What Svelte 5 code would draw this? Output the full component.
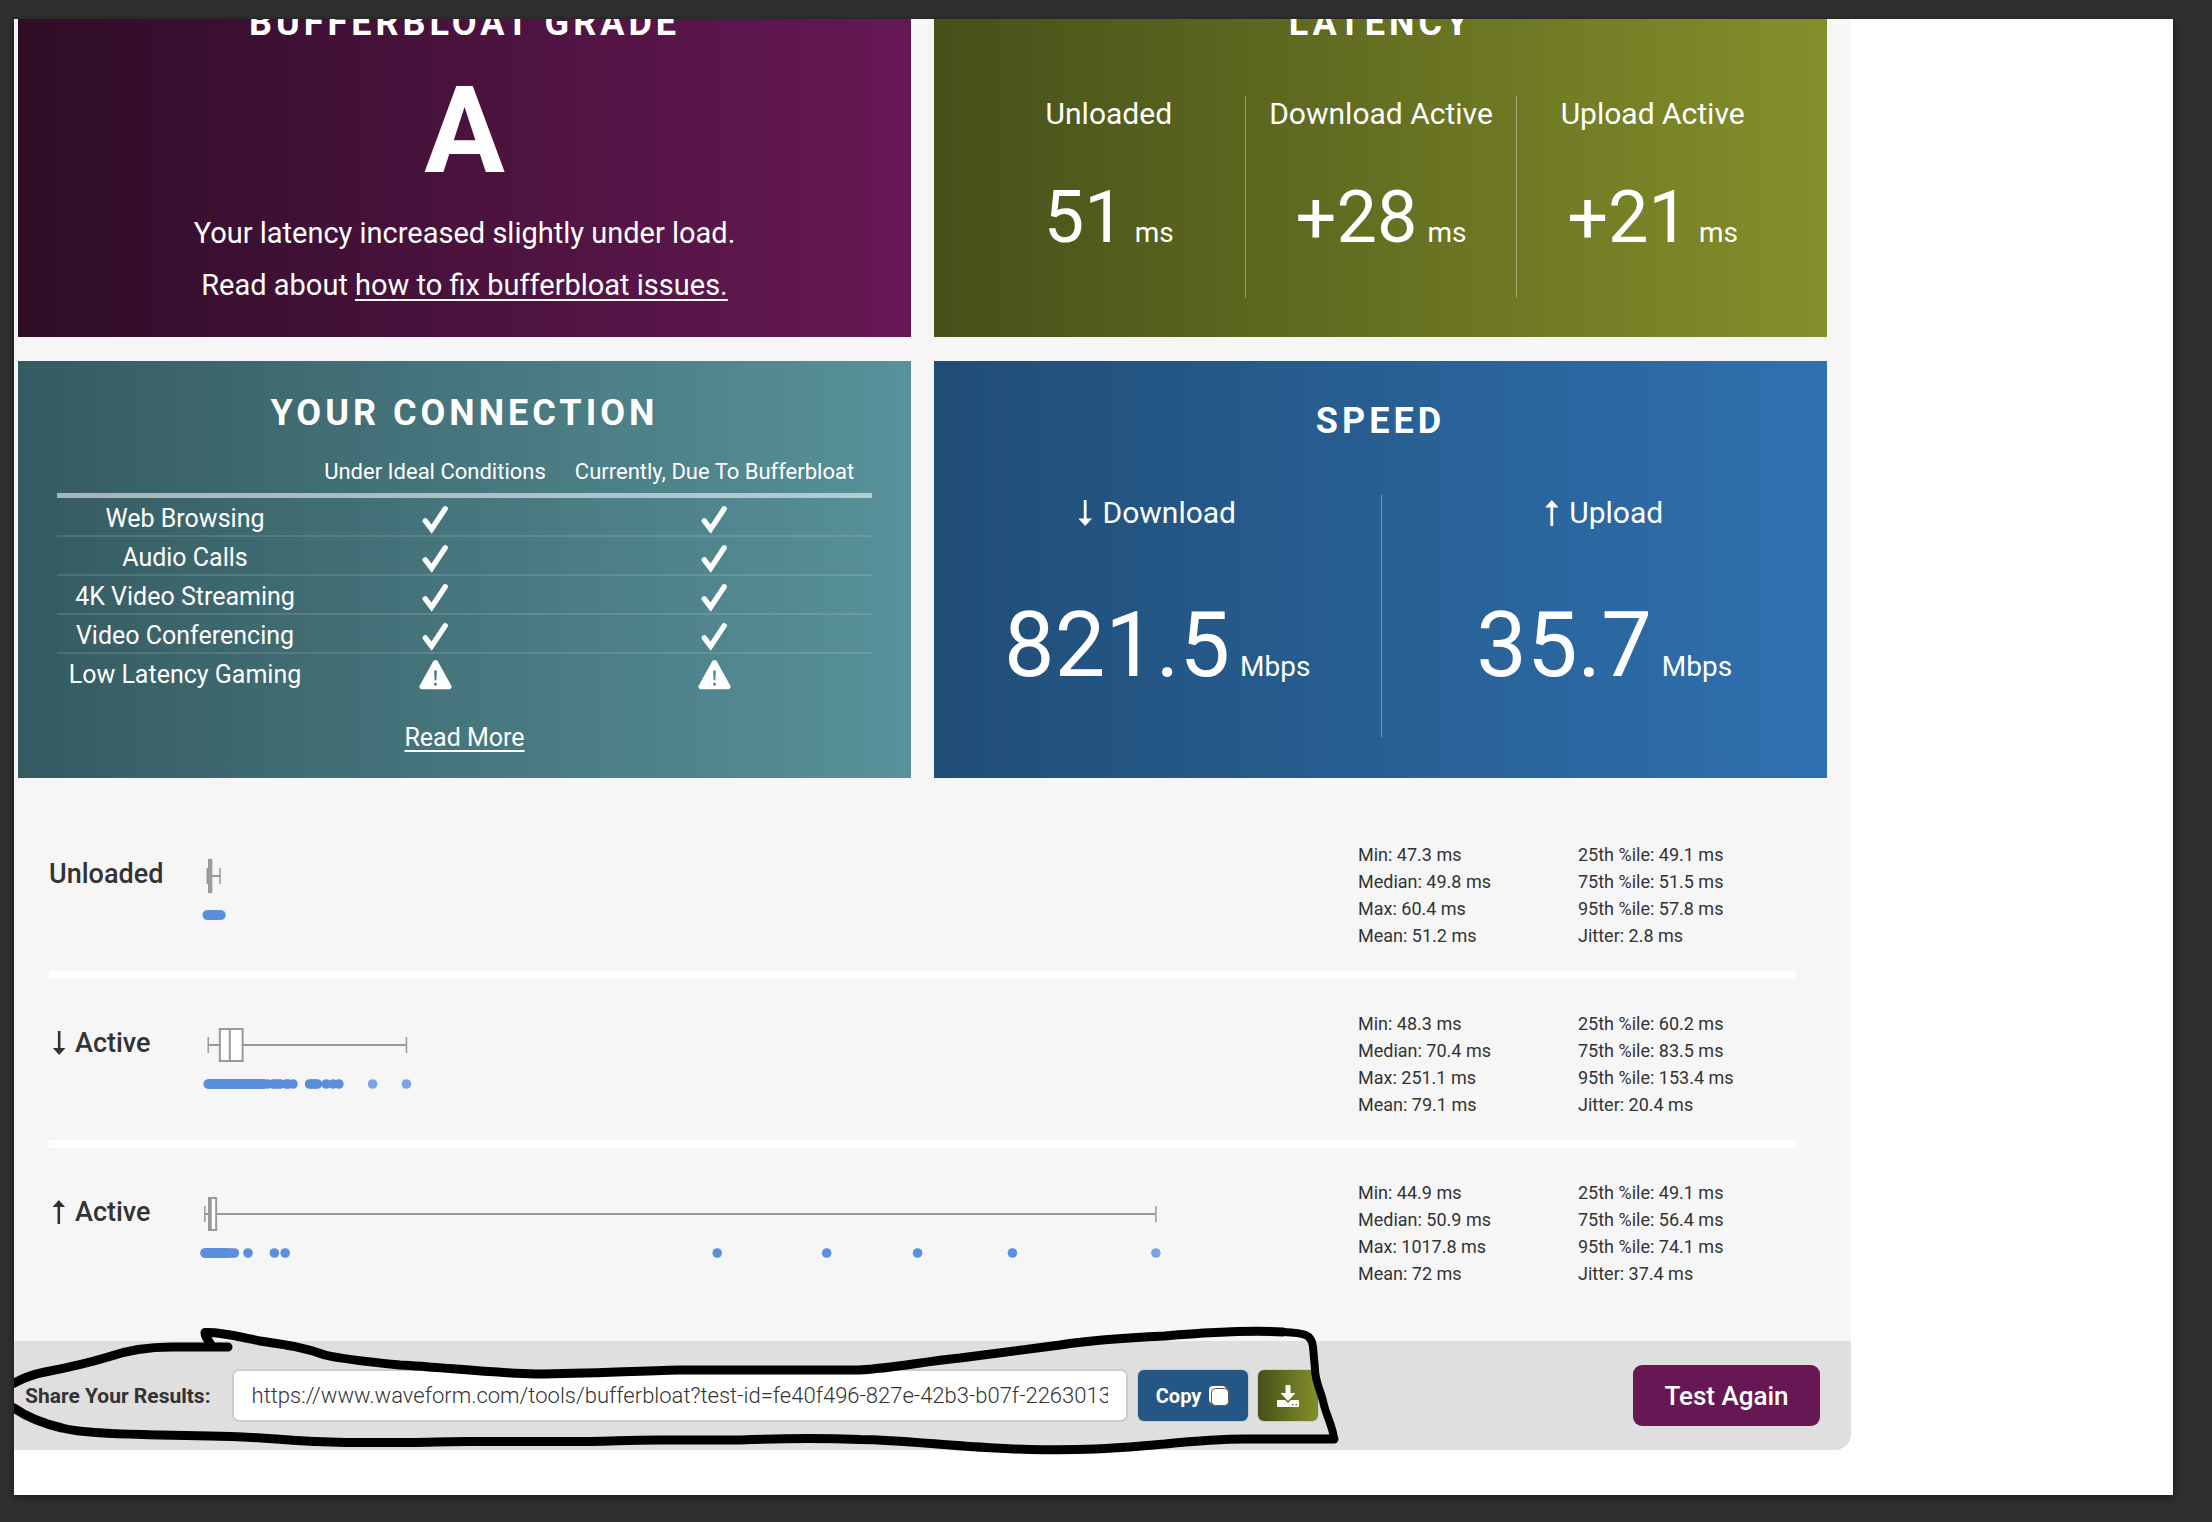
<script>
  const latency = [
    { label: 'Unloaded', value: '51' },
    { label: 'Download Active', value: '+28' },
    { label: 'Upload Active', value: '+21' },
  ];
  const speeds = [
    { label: 'Download', dir: 'down', value: '821.5' },
    { label: 'Upload', dir: 'up', value: '35.7' },
  ];
  const uses = [
    { name: 'Web Browsing', ok: true },
    { name: 'Audio Calls', ok: true },
    { name: '4K Video Streaming', ok: true },
    { name: 'Video Conferencing', ok: true },
    { name: 'Low Latency Gaming', ok: false },
  ];

  const run = (from, to, step) => {
    const out = [];
    for (let v = from; v <= to; v += step) out.push(v);
    return out;
  };

  const series = [
    {
      label: 'Unloaded', dir: '',
      min: 47.3, median: 49.8, max: 60.4, mean: 51.2, p25: 49.1, p75: 51.5, p95: 57.8, jitter: 2.8,
      dots: run(47.3, 61.4, 1), faint: [],
    },
    {
      label: 'Active', dir: 'down',
      min: 48.3, median: 70.4, max: 251.1, mean: 79.1, p25: 60.2, p75: 83.5, p95: 153.4, jitter: 20.4,
      dots: [...run(48.3, 106, 1), 109, 115, 117, 120, 122, 128, 130, 135, 152, 154, 156, 158, 160, 169, 176, 182],
      faint: [216.5, 251.1],
    },
    {
      label: 'Active', dir: 'up',
      min: 44.9, median: 50.9, max: 1017.8, mean: 72, p25: 49.1, p75: 56.4, p95: 74.1, jitter: 37.4,
      dots: [...run(44.9, 67, 1), 70, 72, 75, 89, 116, 127, 569, 681, 774, 871],
      faint: [1017.8],
    },
  ];

  // Milliseconds to plot units: the three rows share one axis.
  const px = (ms) => ms * 0.9775 - 28;

  let shareUrl = $state('https://www.waveform.com/tools/bufferbloat?test-id=fe40f496-827e-42b3-b07f-2263013a41c7');
</script>

{#snippet arrow(dir)}
  <svg class="arrow" class:up={dir === 'up'} viewBox="0 0 14 26" aria-hidden="true">
    <path d="M5.800 0h2.800v18.500H14L7.200 26 0.400 18.500H5.800z" fill="currentColor" />
  </svg>
{/snippet}

{#snippet status(ok)}
  {#if ok}
    <svg class="status" viewBox="0 0 34 34" role="img" aria-label="Good">
      <path d="M6.500 19.500l6.500 8.500L27 7" fill="none" stroke="#fff" stroke-width="5.500" stroke-linecap="round" stroke-linejoin="miter" />
    </svg>
  {:else}
    <svg class="status" viewBox="0 0 34 34" role="img" aria-label="Warning">
      <path fill="#fff" fill-rule="evenodd" d="M14.800 3.200a2.600 2.600 0 0 1 4.400 0l14 25.200a2.600 2.600 0 0 1-2.300 3.900H3.100a2.600 2.600 0 0 1-2.300-3.900zM15.600 13l.5 10h1.800l.5-10zM17 25.500a1.500 1.500 0 1 0 0 3 1.500 1.500 0 0 0 0-3z" />
    </svg>
  {/if}
{/snippet}

<div class="frame">
  <main class="canvas">
    <div class="panel">
      <div class="cards">
        <section class="card grade">
          <h2>BUFFERBLOAT GRADE</h2>
          <div class="letter">A</div>
          <p>Your latency increased slightly under load.</p>
          <p>Read about <a href="#fix">how to fix bufferbloat issues.</a></p>
        </section>

        <section class="card latency">
          <h2>LATENCY</h2>
          <div class="columns three">
            {#each latency as l}
              <div class="column">
                <div class="label">{l.label}</div>
                <div class="value">{l.value}<span class="unit">ms</span></div>
              </div>
            {/each}
          </div>
        </section>

        <section class="card connection">
          <h2>YOUR CONNECTION</h2>
          <table>
            <thead>
              <tr>
                <th class="use" aria-label="Use"></th>
                <th class="ideal" scope="col">Under Ideal Conditions</th>
                <th scope="col">Currently, Due To Bufferbloat</th>
              </tr>
            </thead>
            <tbody>
              {#each uses as u}
                <tr>
                  <th scope="row">{u.name}</th>
                  <td>{@render status(u.ok)}</td>
                  <td>{@render status(u.ok)}</td>
                </tr>
              {/each}
            </tbody>
          </table>
          <a class="more" href="#more">Read More</a>
        </section>

        <section class="card speed">
          <h2>SPEED</h2>
          <div class="columns two">
            {#each speeds as s}
              <div class="column">
                <div class="label">{@render arrow(s.dir)}{s.label}</div>
                <div class="value">{s.value}<span class="unit">Mbps</span></div>
              </div>
            {/each}
          </div>
        </section>
      </div>

      <section class="stats">
        {#each series as s}
          <div class="row">
            <h3>{#if s.dir}{@render arrow(s.dir)}{/if}{s.label}</h3>
            <svg class="plot" viewBox="0 0 1169 161" preserveAspectRatio="xMinYMin meet" aria-hidden="true">
              <g fill="none" stroke="#999" stroke-width="2">
                <path d="M{px(s.min)} 66H{px(s.p25)}M{px(s.p75)} 66H{px(s.max)}" />
                <path d="M{px(s.min)} 58v16M{px(s.max)} 58v16" stroke-width="1.500" />
                <rect x={px(s.p25)} y="50" width={px(s.p75) - px(s.p25)} height="32" fill="#fff" />
                <path d="M{px(s.median)} 50v32" />
              </g>
              {#each s.dots as d}<circle cx={px(d)} cy="105" r="4.800" fill="#5b8fdd" />{/each}
              {#each s.faint as d}<circle cx={px(d)} cy="105" r="4.800" fill="#7ba4e3" />{/each}
            </svg>
            <ul>
              <li>Min: {s.min} ms</li>
              <li>Median: {s.median} ms</li>
              <li>Max: {s.max} ms</li>
              <li>Mean: {s.mean} ms</li>
            </ul>
            <ul>
              <li>25th %ile: {s.p25} ms</li>
              <li>75th %ile: {s.p75} ms</li>
              <li>95th %ile: {s.p95} ms</li>
              <li>Jitter: {s.jitter} ms</li>
            </ul>
          </div>
        {/each}
      </section>

      <footer>
        <label for="share">Share Your Results:</label>
        <input id="share" type="text" readonly bind:value={shareUrl} />
        <button class="copy" type="button">
          Copy
          <svg width="20" height="20" viewBox="0 0 20 20" aria-hidden="true">
            <path d="M13 0h6v6zM0 13v6h6z" fill="#5b564f" />
            <rect x="0" y="0" width="17" height="17" rx="4" fill="#fff" />
            <rect x="2.500" y="2.500" width="17" height="17" rx="4" fill="#fff" stroke="#5b564f" stroke-width="1" />
          </svg>
        </button>
        <button class="save" type="button" aria-label="Download results">
          <svg width="22" height="22" viewBox="0 0 22 22" aria-hidden="true">
            <path fill="#fff" d="M8.500 0h5v8H18.500L11 16 3.500 8H8.500z" />
            <path fill="#fff" fill-rule="evenodd" d="M1 15h7l3 3 3-3h7a1 1 0 0 1 1 1V21a1 1 0 0 1-1 1H1a1 1 0 0 1-1-1v-5a1 1 0 0 1 1-1zM15 19v1.500h1.500V19zM18.500 19v1.500H20V19z" />
          </svg>
        </button>
        <button class="again" type="button">Test Again</button>

        <svg class="marker" width="1837" height="109" viewBox="14 1340 1837 109" aria-hidden="true">
          <g fill="none" stroke="#000" stroke-linecap="round" stroke-linejoin="round">
            <path stroke-width="9" d="M228 1346H172C150 1346 125 1350 108 1356C85 1363 66 1367 45 1371C28 1374 20 1379 12 1383C0 1390 0 1400 14 1407C28 1417 45 1423 62 1427C85 1433 130 1433 160 1434L210 1435C260 1435 290 1441 345 1441.500H410C440 1441 450 1440 480 1440.500H590C620 1440 625 1439 660 1439H740C790 1437 820 1437 860 1438.500C910 1439 960 1447 1030 1448.500C1095 1450 1125 1446 1165 1443C1195 1440 1215 1438 1245 1438H1334" />
            <path stroke-width="8" d="M1334 1438C1333 1425 1326 1415 1323 1400C1320 1388 1315 1380 1315 1368L1313 1346C1312 1333 1304 1332 1283 1331" />
            <path stroke-width="9" d="M1283 1331C1250 1329 1200 1332 1165 1335C1120 1337 1085 1340 1060 1344L960 1357C920 1361 895 1367 859 1369H680C630 1370 590 1373 535 1373C490 1372 440 1366 400 1364C370 1361 340 1358 325 1354C300 1345 280 1343 260 1340C240 1336 222 1331 205 1331.500C205 1337 208 1338 211 1344" />
          </g>
        </svg>
      </footer>
    </div>
  </main>
</div>

<style>
  :global(body) {
    margin: 0;
    background: #303030;
  }
  .frame {
    padding: 19px 39px 27px 14px;
    font-family: Roboto, 'Liberation Sans', sans-serif;
    color: #333;
  }
  .canvas {
    background: #fff;
    padding: 0 322px 45px 0;
    overflow: hidden;
    box-shadow: 0 2px 8px rgba(0, 0, 0, 0.5);
  }
  .panel {
    margin-top: -42px;
    background: #f6f6f6;
    border-bottom-right-radius: 16px;
  }
  .cards {
    display: grid;
    grid-template-columns: 1fr 1fr;
    gap: 24px 23px;
    padding: 0 24px 0 4px;
  }
  .card {
    color: #fff;
    text-align: center;
    font-size: 30px;
  }
  .card a {
    color: inherit;
    text-decoration-thickness: 2px;
    text-underline-offset: 4px;
  }
  h2 {
    margin: 0;
    font-size: 36px;
    line-height: 44px;
    font-weight: 700;
    letter-spacing: 4px;
  }
  .grade {
    padding: 24px 0 26px;
    background: linear-gradient(90deg, #2e0d27, #671854);
  }
  .latency {
    padding: 24px 39px 0;
    background: linear-gradient(90deg, #465019, #848f2a);
  }
  .connection {
    padding: 30px 39px 22px;
    background: linear-gradient(90deg, #355a61, #58929a);
  }
  .speed {
    padding: 38px 0 0;
    background: linear-gradient(90deg, #204d76, #2f71b0);
  }
  .letter {
    margin: 26px 0 16px;
    font-size: 120px;
    line-height: 120px;
    font-weight: 700;
  }
  .grade p {
    margin: 0;
    font-size: 29px;
    line-height: 52px;
  }
  .columns {
    display: grid;
  }
  .three {
    grid-template-columns: repeat(3, 1fr);
    margin-top: 51px;
  }
  .two {
    grid-template-columns: repeat(2, 1fr);
    margin-top: 52px;
  }
  .column + .column {
    border-left: 1px solid rgba(255, 255, 255, 0.35);
  }
  .column .label {
    line-height: 36px;
  }
  .value {
    white-space: nowrap;
  }
  .three .value {
    margin-top: 50px;
    padding-bottom: 44px;
    font-size: 72px;
    line-height: 72px;
  }
  .two .value {
    margin-top: 70px;
    padding-bottom: 46px;
    font-size: 90px;
    line-height: 90px;
  }
  .unit {
    margin-left: 10px;
    font-size: 28px;
    line-height: 1;
  }
  .arrow {
    width: 14px;
    height: 26px;
    margin-right: 10px;
    vertical-align: -3px;
  }
  .arrow.up {
    transform: rotate(180deg);
  }
  table {
    width: 100%;
    margin: 21px 0 25px;
    border-collapse: separate;
    border-spacing: 0;
    table-layout: fixed;
  }
  .use {
    width: 256px;
  }
  .ideal {
    width: 244px;
  }
  th {
    font-weight: 400;
    padding: 0;
  }
  thead th {
    padding-bottom: 5px;
    border-bottom: 5px solid rgba(255, 255, 255, 0.55);
    font-size: 22px;
    line-height: 32px;
  }
  tbody th,
  td {
    box-sizing: border-box;
    height: 39px;
    padding: 4px 0 0;
    border-bottom: 2px solid rgba(255, 255, 255, 0.12);
    font-size: 25px;
    line-height: 33px;
  }
  tbody tr:last-child > * {
    border-bottom-color: transparent;
  }
  .status {
    display: block;
    width: 33px;
    height: 33px;
    margin: 0 auto;
  }
  .more {
    display: inline-block;
    font-size: 25px;
    line-height: 36px;
  }
  .stats {
    padding: 32px 55px 32px 35px;
  }
  .row {
    display: grid;
    grid-template-columns: 140px 1fr 220px 218px;
    height: 161px;
  }
  .row + .row {
    border-top: 8px solid #fff;
  }
  h3 {
    display: flex;
    align-items: center;
    height: 36px;
    margin: 46px 0 0;
    font-size: 27px;
    line-height: 36px;
    font-weight: 500;
    white-space: nowrap;
  }
  h3 .arrow {
    margin-left: 3px;
    margin-right: 9px;
    height: 24px;
  }
  .plot {
    display: block;
    width: 100%;
  }
  ul {
    margin: 0;
    padding: 31px 0 0;
    list-style: none;
    font-size: 18px;
    line-height: 27px;
  }
  footer {
    position: relative;
    display: flex;
    align-items: center;
    height: 109px;
    padding: 0 31px 0 11px;
    background: #dfdfdf;
    border-bottom-right-radius: 16px;
  }
  label {
    margin-right: 21px;
    font-size: 21px;
    font-weight: 700;
    white-space: nowrap;
  }
  input {
    box-sizing: border-box;
    flex: 0 1 896px;
    min-width: 0;
    height: 53px;
    padding: 0 18px;
    border: 2px solid #ccc;
    border-radius: 7px;
    background: #fff;
    font: 300 22px Roboto, 'Liberation Sans', sans-serif;
    color: #333;
  }
  button {
    display: flex;
    align-items: center;
    justify-content: center;
    border: 0;
    padding: 0;
    color: #fff;
    font-family: inherit;
    font-weight: 700;
  }
  .copy,
  .save {
    height: 51px;
    margin-left: 10px;
    border-radius: 6px;
    box-shadow: 0 0 0 1px #ccc;
  }
  .copy {
    width: 110px;
    gap: 8px;
    background: #245785;
    font-size: 20px;
  }
  .save {
    width: 60px;
    background: linear-gradient(90deg, #465019, #848f2a);
  }
  .again {
    width: 187px;
    height: 61px;
    margin-left: auto;
    border-radius: 9px;
    background: #671854;
    font-size: 26px;
    font-weight: 500;
  }
  .marker {
    position: absolute;
    left: 0;
    top: 0;
    overflow: visible;
    pointer-events: none;
  }
</style>
